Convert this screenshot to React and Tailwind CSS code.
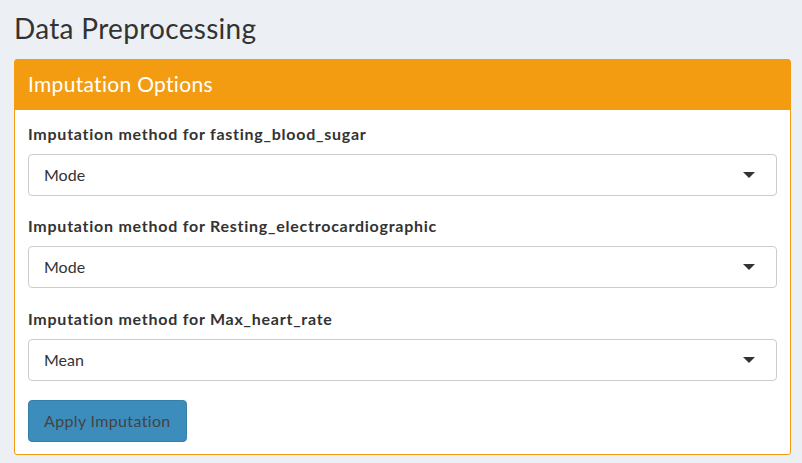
import React, { useState } from 'react';

const fields = [
  { id: 'fbs', label: 'Imputation method for fasting_blood_sugar', value: 'Mode' },
  { id: 'ecg', label: 'Imputation method for Resting_electrocardiographic', value: 'Mode' },
  { id: 'hr', label: 'Imputation method for Max_heart_rate', value: 'Mean' },
];

function Caret() {
  return (
    <svg width="12" height="6" viewBox="0 0 12 6" className="shrink-0">
      <path d="M0 0 L12 0 L6 6 Z" fill="#333" />
    </svg>
  );
}

export default function App() {
  const [values] = useState(fields);

  return (
    <div className="min-h-[463px] bg-[#ecf0f5] pl-[14px] pr-[11px] pt-[9px] pb-[8px] font-['Lato',sans-serif] text-[#333]">
      <h1 className="text-[28px] leading-[38px] tracking-[0.3px] text-[#333] mb-[12px]">Data Preprocessing</h1>

      {/* Imputation card */}
      <div className="bg-white border border-[#f39c12] rounded-[3px]">
        <div className="bg-[#f39c12] h-[50px] px-[13px] pb-[2px] flex items-center">
          <h3 className="text-white text-[21px] tracking-[0.3px]">Imputation Options</h3>
        </div>
        <div className="px-[13px] pt-[13px] pb-[12px]">
          {values.map((f, i) => (
            <div key={f.id} className={i === 1 ? 'mb-[20px]' : 'mb-[19px]'}>
              <label className="block font-bold text-[16px] leading-[22px] tracking-[0.75px] mb-[9px]">{f.label}</label>
              <div className="h-[42px] border border-[#ccc] rounded-[4px] flex items-center justify-between pl-[15px] pr-[21px]">
                <span className="text-[16px]">{f.value}</span>
                <Caret />
              </div>
            </div>
          ))}
          <button className="h-[42px] px-[15px] bg-[#3c8dbc] border border-[#367fa9] rounded-[4px] text-[#444] text-[16px] tracking-[0.35px]">
            Apply Imputation
          </button>
        </div>
      </div>
    </div>
  );
}
